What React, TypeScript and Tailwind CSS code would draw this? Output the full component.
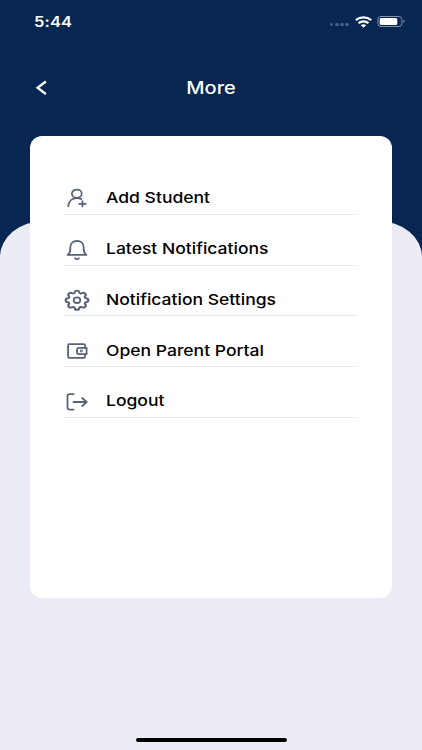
import type { ReactNode } from "react";

type MenuItem = {
    label: string;
    icon: ReactNode;
};

const iconProps = {
    width: 26,
    height: 24,
    viewBox: "0 0 26 24",
    fill: "none",
    stroke: "#596377",
    strokeWidth: 1.8,
    strokeLinecap: "round" as const,
    strokeLinejoin: "round" as const,
};

const AddStudentIcon = () => (
    <svg {...iconProps}>
        <ellipse cx="12.8" cy="6.7" rx="4.9" ry="4.1" />
        <path d="M4.300 19.300c.2-4.900 3.600-8.300 8.600-8.300 1.800 0 3.200.4 4.400 1.100" />
        <path d="M18.500 14.200v5.200M15.200 16.800h6.600" />
    </svg>
);

const BellIcon = () => (
    <svg {...iconProps}>
        <path d="M3.600 16.900c1.900-1.300 2.700-2.600 2.700-5.300V9.300C6.300 5.500 9.100 3 13 3s6.700 2.500 6.700 6.300v2.300c0 2.700.8 4 2.700 5.300z" />
        <path d="M11.200 20.300c.4.600 1 .9 1.800.9s1.400-.3 1.800-.9" />
    </svg>
);

// eight rounded teeth around a centre ring
const GearIcon = () => (
    <svg {...iconProps}>
        <path
            transform="translate(13 12.200) scale(1.240 1.050)"
            d="M-1.900-7.400C-1.500-9.700 1.500-9.700 1.900-7.400 2.100-6.400 3-6 3.900-6.600 5.800-7.900 7.900-5.800 6.600-3.900 6-3 6.400-2.100 7.400-1.900 9.700-1.500 9.700 1.500 7.400 1.900 6.400 2.100 6 3 6.600 3.900 7.900 5.800 5.800 7.900 3.900 6.600 3 6 2.100 6.400 1.900 7.400 1.500 9.700-1.500 9.700-1.900 7.400-2.100 6.400-3 6-3.900 6.600-5.800 7.900-7.900 5.800-6.600 3.900-6 3-6.400 2.100-7.400 1.900-9.700 1.500-9.700-1.500-7.400-1.900-6.400-2.100-6-3-6.600-3.900-7.900-5.800-5.800-7.900-3.900-6.600-3-6-2.100-6.400-1.900-7.400z"
        />
        <ellipse cx="13" cy="12.2" rx="3.300" ry="2.800" />
    </svg>
);

const WalletIcon = () => (
    <svg {...iconProps}>
        <path d="M21 8.700V6.300c0-.8-.5-1.200-1.300-1.200H5.400c-.8 0-1.300.4-1.300 1.200v11.400c0 .8.500 1.200 1.300 1.200h14.300c.8 0 1.300-.4 1.300-1.200v-2.400" />
        <path d="M22.600 8.900h-7.200c-1.500 0-2.500.9-2.500 2.100v1.900c0 1.200 1 2.200 2.500 2.200h7.200z" />
        <circle cx="17.4" cy="12" r=".5" />
    </svg>
);

const LogoutIcon = () => (
    <svg {...iconProps}>
        <path d="M9.600 4.100H6c-1.600 0-2.500.8-2.500 2.100v11.400c0 1.300.9 2.100 2.500 2.100h3.600" />
        <path d="M9.500 12h13M18.200 8l4.500 4-4.500 4" />
    </svg>
);

const menuItems: MenuItem[] = [
    { label: "Add Student", icon: <AddStudentIcon /> },
    { label: "Latest Notifications", icon: <BellIcon /> },
    { label: "Notification Settings", icon: <GearIcon /> },
    { label: "Open Parent Portal", icon: <WalletIcon /> },
    { label: "Logout", icon: <LogoutIcon /> },
];

const StatusBar = () => (
    <div className="flex h-[43px] items-center justify-between pl-[34px] pr-4 text-white">
        <span className="origin-left scale-x-[1.18] text-[14px] font-semibold leading-none tracking-[0.1px]">
            5:44
        </span>
        <div className="flex items-center">
            <div className="mr-[6px] mt-[6px] flex gap-[1.5px]">
                {[0, 1, 2, 3].map((dot) => (
                    <span key={dot} className="h-[3.5px] w-[3.7px] rounded-full bg-[#485d83]" />
                ))}
            </div>
            <svg width="17" height="12" viewBox="0 0 17 12" fill="none" stroke="#fff" strokeWidth="2.3">
                <path d="M.8 4.100C5.200.5 11.800.5 16.200 4.100" />
                <path d="M3.500 7.200c2.900-2.300 7.100-2.300 10 0" />
                <path d="M5.800 9.300c1.500-1.300 3.900-1.300 5.400 0L8.500 11.700z" fill="#fff" stroke="none" />
            </svg>
            <svg className="ml-[5px]" width="29" height="11" viewBox="0 0 29 11" fill="none">
                <rect x=".9" y=".5" width="24" height="10" rx="3" stroke="#8592aa" />
                <rect x="2.7" y="2" width="17.6" height="7" rx="1.5" fill="#fff" />
                <path d="M26.500 3.800c1.500.5 1.500 2.900 0 3.400z" fill="#8592aa" />
            </svg>
        </div>
    </div>
);

const MenuRow = ({ label, icon }: MenuItem) => (
    <li className="flex h-[50.8px] items-end border-b border-[#ebebeb] pb-[3px]">
        {icon}
        <span className="mb-[3.5px] ml-4 origin-left scale-x-[1.168] whitespace-nowrap text-[15px] font-medium leading-[18px] text-black">
            {label}
        </span>
    </li>
);

export default function App() {
    return (
        <div className="relative flex h-[750px] w-[422px] flex-col overflow-hidden bg-[#072652] font-['Inter',sans-serif]">
            {/* light sheet behind the card */}
            <div className="absolute inset-x-0 bottom-0 top-[221px] rounded-t-[44px_36px] bg-[#ebecf6]" />

            <StatusBar />

            <header className="grid h-[92.5px] grid-cols-[1fr_auto_1fr] items-start pt-[33px] text-white">
                <svg className="ml-[35px] mt-[4px]" width="13" height="16" viewBox="0 0 13 16" fill="none" stroke="#fff" strokeWidth="2.4">
                    <path d="M10.900 1.500 2.600 7.800l8.300 6.300" />
                </svg>
                <h1 className="scale-x-[1.18] text-[17px] font-medium leading-6">More</h1>
            </header>

            <main className="relative mx-[30px] h-[462px] rounded-[12px] bg-white px-[34px] pt-[28.5px]">
                <ul>
                    {menuItems.map((item) => (
                        <MenuRow key={item.label} {...item} />
                    ))}
                </ul>
            </main>

            <div className="relative mx-auto mb-[8px] mt-auto h-[4px] w-[151px] rounded-full bg-black" />
        </div>
    );
}
